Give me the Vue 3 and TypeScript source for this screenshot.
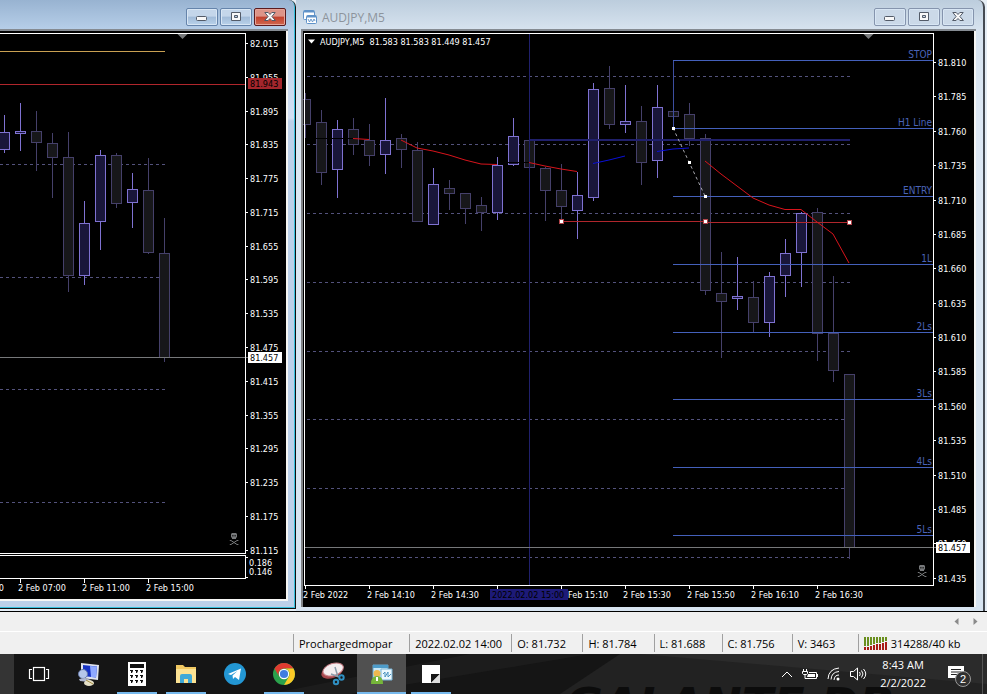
<script setup lang="ts">
type Candle = [cx: number, high: number, low: number, top: number, bottom: number, up: 0 | 1]
type Label = [y: number, text: string]

const leftCandles: Candle[] = [
  [4, 115, 153, 132, 149, 1], [20, 103, 151, 131, 133, 1], [36, 111, 171, 131, 142, 0],
  [52, 133, 198, 143, 157, 0], [68, 132, 292, 157, 275, 0], [84, 201, 285, 223, 275, 1],
  [100, 150, 250, 155, 221, 1], [116, 153, 208, 155, 203, 0], [132, 173, 228, 189, 202, 1],
  [148, 158, 254, 190, 252, 0], [164, 218, 362, 253, 357, 0],
]
const rightCandles: Candle[] = [
  [305, 93, 138, 99, 124, 0], [321, 110, 185, 122, 172, 0], [337, 120, 198, 129, 169, 1],
  [353, 118, 155, 129, 144, 0], [369, 124, 166, 140, 155, 0], [385, 98, 174, 140, 154, 1],
  [401, 134, 168, 138, 149, 0], [417, 142, 222, 150, 221, 0], [433, 168, 225, 184, 224, 1],
  [449, 180, 210, 188, 193, 0], [465, 193, 224, 193, 208, 0], [481, 197, 231, 205, 212, 0],
  [497, 157, 220, 165, 212, 1], [513, 118, 166, 136, 164, 1], [529, 140, 168, 140, 167, 0],
  [545, 167, 221, 168, 190, 0], [561, 164, 222, 190, 206, 0], [577, 172, 239, 195, 210, 1],
  [593, 83, 201, 89, 197, 1], [609, 66, 129, 88, 124, 0], [625, 85, 133, 121, 124, 1],
  [641, 106, 185, 121, 162, 0], [657, 85, 178, 107, 160, 1], [673, 61, 128, 111, 116, 0],
  [689, 103, 146, 114, 138, 0], [705, 134, 295, 138, 290, 0], [721, 252, 358, 293, 301, 0],
  [737, 257, 310, 296, 298, 1], [753, 281, 332, 297, 322, 0], [769, 272, 337, 276, 322, 1],
  [785, 239, 297, 253, 275, 1], [801, 212, 287, 213, 252, 1], [817, 208, 361, 212, 333, 0],
  [833, 276, 382, 333, 370, 0], [849, 374, 559, 374, 547, 0],
]
const leftPrices: Label[] = [
  [43, '82.015'], [77, '81.955'], [111, '81.895'], [144, '81.835'], [178, '81.775'], [212, '81.715'],
  [246, '81.655'], [279, '81.595'], [313, '81.535'], [347, '81.475'], [381, '81.415'], [415, '81.355'],
  [448, '81.295'], [482, '81.235'], [516, '81.175'], [550, '81.115'],
]
const rightPrices: Label[] = [
  [62, '81.810'], [96, '81.785'], [131, '81.760'], [165, '81.735'], [200, '81.710'], [234, '81.685'],
  [268, '81.660'], [303, '81.635'], [337, '81.610'], [371, '81.585'], [406, '81.560'], [440, '81.535'],
  [475, '81.510'], [509, '81.485'], [543, '81.460'], [578, '81.435'],
]
const levels: Label[] = [
  [60, 'STOP'], [128, 'H1 Line'], [196, 'ENTRY'], [264, '1L'],
  [332, '2Ls'], [399, '3Ls'], [467, '4Ls'], [535, '5Ls'],
]
const leftTimes: [number, string][] = [[20, '2 Feb 07:00'], [84, '2 Feb 11:00'], [148, '2 Feb 15:00']]
const rightTimes: [number, string][] = [
  [305, '2 Feb 2022'], [369, '2 Feb 14:10'], [433, '2 Feb 14:30'],
  [625, '2 Feb 15:30'], [689, '2 Feb 15:50'], [753, '2 Feb 16:10'], [817, '2 Feb 16:30'],
]
const rightTicks = [305, 369, 433, 497, 561, 625, 689, 753, 817]
const leftGrid = [164, 277, 389, 502]
const rightGrid = [76, 144, 213, 282, 351, 419, 488, 557]
const quote = 'AUDJPY,M5\u00a0\u00a081.583 81.583 81.449 81.457'
const status = ['Prochargedmopar', '2022.02.02 14:00', 'O: 81.732', 'H: 81.784', 'L: 81.688', 'C: 81.756', 'V: 3463']
const trafficBars = Array.from({ length: 8 }, (_, i) => ({ x: i * 3, split: 10 - Math.floor(i * 0.75) }))
</script>

<template>
  <div class="screen">
    <main class="workspace">
      <section class="win active">
        <header class="titlebar">
          <div class="controls">
            <button aria-label="Minimize"><svg width="12" height="10"><rect x=".5" y="4.500" width="10" height="4" rx="1" /></svg></button>
            <button aria-label="Restore"><svg width="12" height="10"><path fill-rule="evenodd" d="M1.500.5h9v8h-9zM4.500 3.500h3v2h-3z" /></svg></button>
            <button class="close" aria-label="Close"><svg width="12" height="10"><path d="M.8.5h3.400L6 2.500 7.800.5h3.400L7.900 4.500l3.500 4H7.900L6 6.500l-1.900 2H.6l3.500-4z" /></svg></button>
          </div>
        </header>
        <div class="view">
          <svg class="chart" viewBox="0 31 286 568" role="img" aria-label="Price chart">
            <g class="crisp">
              <path class="dash" v-for="y in leftGrid" :key="y" :d="`M0 ${y + 0.5}H166`" />
              <path class="orange" d="M0 51.500H165" />
              <g v-for="c in leftCandles" :key="c[0]" :class="c[5] ? 'up' : 'down'">
                <path :d="`M${c[0] + 0.5} ${c[1]}V${c[2]}`" />
                <rect :x="c[0] - 4.5" :y="c[3] + 0.5" width="10" :height="c[4] - c[3]" />
              </g>
              <path class="now" d="M0 357.500H248" />
              <path class="crimson" d="M0 84.500H245" />
              <path class="axis" d="M0 33.500H245.500V553.500H0M0 555.500H245.500V578.500H0" />
              <path class="axis" v-for="p in leftPrices" :key="p[0]" :d="`M245 ${p[0] + 0.5}h3`" />
              <path class="axis" v-for="t in leftTimes" :key="t[0]" :d="`M${t[0] + 0.5} 579v4`" />
              <path class="axis" d="M246 557.500h2M246 577.500h2" />
            </g>
            <path class="shift" d="M177.500 34h10l-5 5z" />
            <g class="lbl">
              <text v-for="p in leftPrices" :key="p[0]" x="250" :y="p[0] + 4">{{ p[1] }}</text>
              <text x="249" y="566">0.186</text>
              <text x="249" y="575">0.146</text>
              <text x="4" y="591" text-anchor="end">0</text>
              <text v-for="t in leftTimes" :key="t[1]" :x="t[0] - 2" y="591">{{ t[1] }}</text>
            </g>
            <rect x="248" y="78" width="34" height="11" fill="#a3262c" />
            <rect x="248" y="352" width="34" height="11" fill="#fff" />
            <g class="lbl ink">
              <text x="250" y="87">81.943</text>
              <text x="250" y="361">81.457</text>
            </g>
            <g class="skull" transform="translate(229 533)">
              <path fill-rule="evenodd" d="M3 0h4l1 1v3l-1 1v1H3V5L2 4V1zM3.400 2v1.400h1V2zM5.600 2v1.400h1V2z" />
              <path class="bones" d="M.8 7.500h1.200L8 11.500h1.400M9.400 7.500H8L2 11.500H.8" />
            </g>
          </svg>
        </div>
      </section>

      <section class="win idle">
        <header class="titlebar">
          <svg class="doc" width="14" height="15" aria-hidden="true">
            <g fill="#fff" stroke="#5f92c8">
              <rect x=".5" y=".5" width="11" height="9" rx="1" /><path d="M1 1.500h10" stroke-width="2" />
              <rect x="3.500" y="5.500" width="10" height="8" rx="1" /><path d="M4 6.500h9" stroke-width="2" />
              <path d="M5 9l1.500 3L8 9l1.500 3L11 9l1 2" fill="none" stroke-width=".9" />
            </g>
          </svg>
          <h1>AUDJPY,M5</h1>
          <div class="controls">
            <button aria-label="Minimize"><svg width="12" height="10"><rect x=".5" y="4.500" width="10" height="4" rx="1" /></svg></button>
            <button aria-label="Restore"><svg width="12" height="10"><path fill-rule="evenodd" d="M1.500.5h9v8h-9zM4.500 3.500h3v2h-3z" /></svg></button>
            <button aria-label="Close"><svg width="12" height="10"><path d="M.8.5h3.400L6 2.500 7.800.5h3.400L7.900 4.500l3.500 4H7.900L6 6.500l-1.900 2H.6l3.500-4z" /></svg></button>
          </div>
        </header>
        <div class="view">
          <svg class="chart" viewBox="303 31 671 576" role="img" aria-label="AUDJPY M5 price chart">
            <g class="crisp">
              <path class="dash" v-for="y in rightGrid" :key="y" :d="`M307 ${y + 0.5}H851`" />
              <path class="navy" d="M529.500 34V585" />
              <g v-for="c in rightCandles" :key="c[0]" :class="c[5] ? 'up' : 'down'">
                <path :d="`M${c[0] + 0.5} ${c[1]}V${c[2]}`" />
                <rect :x="c[0] - 4.5" :y="c[3] + 0.5" width="10" :height="c[4] - c[3]" />
              </g>
              <path class="navy" d="M529.500 139V168" />
              <path class="navy" stroke-width="2" d="M529 140H850" />
              <path stroke="#000" d="M316 138.500H353M508 162.500H529" />
              <path class="level" v-for="l in levels" :key="l[0]" :d="`M673 ${l[0] + 0.5}H933`" />
              <path stroke="#3c4ea0" d="M673.500 61V128" />
              <path class="now" d="M305 547.500H936" />
              <path class="crimson" d="M561 221.500H705M705 222.500H850" />
            </g>
            <g class="ma">
              <path d="M353 138.500L369 139.500M401 140L417 148 433 151 449 155 465 160 481 164 497 164.500M529 162.500L545 166 561 169 577 171.500M705 161L721 174 737 186 753 198 769 205 785 209.500H801L817 222 833 234 849 263" />
              <path class="blue" d="M593 163.500L609 160 625 156M657 151.500L673 149 689 148" />
              <path class="probe" d="M673 128L705 196" />
            </g>
            <g class="crisp">
              <rect class="knob red" v-for="k in [[561, 221], [705, 221], [849, 222]]" :key="k[0]" :x="k[0] - 1.5" :y="k[1] - 1.5" width="4" height="4" />
              <rect class="knob" v-for="k in [[673, 128], [689, 162], [705, 196]]" :key="k[0]" :x="k[0] - 1" :y="k[1] - 1" width="3" height="3" />
              <path class="axis" d="M304.500 585.500V33.500H933.500V585.500H304" />
              <path class="axis" v-for="p in rightPrices" :key="p[0]" :d="`M933 ${p[0] + 0.5}h3`" />
              <path class="axis" v-for="t in rightTicks" :key="t" :d="`M${t + 0.5} 586v3`" />
            </g>
            <path class="shift" d="M863.500 34h10l-5 5z" />
            <path fill="#fff" d="M308 39.500h7l-3.500 4z" />
            <g class="lbl">
              <text x="320" y="45">{{ quote }}</text>
              <text v-for="p in rightPrices" :key="p[0]" x="938" :y="p[0] + 4">{{ p[1] }}</text>
              <text v-for="t in rightTimes" :key="t[0]" :x="t[0] - 2" y="598">{{ t[1] }}</text>
            </g>
            <g class="lbl tag">
              <text v-for="l in levels" :key="l[0]" x="932" :y="l[0] - 2" text-anchor="end">{{ l[1] }}</text>
            </g>
            <rect x="490" y="589" width="78" height="11" fill="#1d1a78" />
            <rect x="936" y="542" width="34" height="11" fill="#fff" />
            <text class="lbl" x="568" y="598">Feb 15:10</text>
            <g class="lbl ink">
              <text x="492" y="598">2022.02.02 15:00</text>
              <text x="938" y="551">81.457</text>
            </g>
            <g class="skull" transform="translate(917 565)">
              <path fill-rule="evenodd" d="M3 0h4l1 1v3l-1 1v1H3V5L2 4V1zM3.400 2v1.400h1V2zM5.600 2v1.400h1V2z" />
              <path class="bones" d="M.8 7.500h1.200L8 11.500h1.400M9.400 7.500H8L2 11.500H.8" />
            </g>
          </svg>
        </div>
      </section>
    </main>

    <nav class="scroller" aria-label="Chart tabs">
      <button aria-label="Scroll left"><svg width="5" height="8"><path d="M4.500 0v7L.5 3.500z" /></svg></button>
      <button aria-label="Scroll right"><svg width="5" height="8"><path d="M.5 0v7l4-3.500z" /></svg></button>
    </nav>

    <footer class="status">
      <span v-for="s in status" :key="s" class="cell">{{ s }}</span>
      <span class="cell traffic">
        <svg width="23" height="13" aria-hidden="true">
          <g v-for="b in trafficBars" :key="b.x">
            <rect :x="b.x" y="0" width="2" :height="b.split - 1" fill="#6a8f1e" />
            <rect :x="b.x" :y="b.split" width="2" :height="13 - b.split" fill="#a81c16" />
          </g>
        </svg>
        314288/40 kb
      </span>
    </footer>

    <footer class="taskbar">
      <svg class="wallpaper" viewBox="0 0 987 40" preserveAspectRatio="xMaxYMid slice" aria-hidden="true">
        <path d="M270 40L470 0h120L350 40z" fill="#242424" opacity=".5" />
        <path d="M560 40L620 0h367v40z" fill="#222" />
        <path d="M640 0l347 30V0z" fill="#2b2b2b" />
        <text class="brand" x="565" y="67">GALANTE DB</text>
      </svg>
      <div class="sliver"></div>
      <div class="apps">
        <button aria-label="Task View">
          <svg width="22" height="16" fill="none" stroke="#fff" stroke-width="1.200">
            <rect x="5.500" y="1.500" width="11" height="13" /><path d="M4 3.500H1.500v9H4M18 3.500h2.500v9H18" />
          </svg>
        </button>
        <button aria-label="Remote Desktop">
          <svg width="24" height="26">
            <path d="M5 2l18 2-1 15-17-2z" fill="#dfe3ee" /><path d="M7 4l14 1.500-1 11-13-1.500z" fill="#1733c4" />
            <path d="M14 5l7 .5-1 11-5-.6z" fill="#8fa9ff" /><circle cx="7" cy="13" r="4.500" fill="#b6c7ea" stroke="#6a7dab" />
            <path d="M3 18l6-1 6 2-3 2-8-1z" fill="#aeb6cf" /><ellipse cx="13" cy="22" rx="5" ry="3" fill="#e6e0c8" /><path d="M10 19l7 4" stroke="#a48d42" />
          </svg>
        </button>
        <button class="open" aria-label="Calculator">
          <svg width="18" height="24"><path d="M0 0h18v24H0z" fill="#fff" /><path d="M2 2h14v4H2z" fill="#111" />
            <g fill="#111"><path v-for="n in 9" :key="n" :d="`M${2 + ((n - 1) % 3) * 5} ${8 + Math.floor((n - 1) / 3) * 5}h3v1l-1 2h-1v-2h-1z`" /></g>
          </svg>
        </button>
        <button class="open" aria-label="File Explorer">
          <svg width="22" height="20"><path d="M1 1h7l2 2h11v15H1z" fill="#f0c862" /><path d="M1 5h20v14H1z" fill="#fbe293" />
            <path d="M5 19v-7q0-2 2-2h8q2 0 2 2v7h-4v-4H9v4z" fill="#3fa9d8" />
          </svg>
        </button>
        <button aria-label="Telegram">
          <svg width="22" height="22"><circle cx="11" cy="11" r="11" fill="#2397d4" /><path d="M4 11l13-5.500-2 11.500-4-3-2 2-.5-3.500 5-4.500-6.500 4z" fill="#fff" /></svg>
        </button>
        <button class="open" aria-label="Chrome">
          <svg width="22" height="22"><circle cx="11" cy="11" r="11" fill="#2ba24c" />
            <path d="M1.500 5.500A11 11 0 0 1 20.500 5.500H11A5.500 5.500 0 0 0 6.200 13.700z" fill="#e03b30" />
            <path d="M20.500 5.500A11 11 0 0 1 11 22l4.800-8.300A5.500 5.500 0 0 0 11 5.500z" fill="#fbc926" />
            <circle cx="11" cy="11" r="5.200" fill="#fff" /><circle cx="11" cy="11" r="4.100" fill="#3f7de0" />
          </svg>
        </button>
        <button aria-label="Snipping Tool">
          <svg width="24" height="24"><ellipse cx="11" cy="10" rx="11" ry="6" transform="rotate(-18 11 10)" fill="#a8494f" />
            <ellipse cx="12" cy="7.500" rx="10.500" ry="6" transform="rotate(-18 12 7)" fill="#f4eef0" stroke="#c98188" />
            <path d="M14 5l3 10M10 12l8 3" stroke="#8b9cab" stroke-width="1.500" /><g fill="none" stroke="#2f8fc2" stroke-width="2"><circle cx="15" cy="20" r="2.200" /><circle cx="20.500" cy="15.500" r="2.200" /></g>
          </svg>
        </button>
        <button class="open current" aria-label="MetaTrader">
          <svg width="22" height="20"><path d="M2 1h15v13H2z" fill="#c9e7f5" stroke="#69a7cc" /><path d="M2 1h15v3H2z" fill="#4d9cca" />
            <path d="M10 5h11v11H10z" fill="#ecf7fd" stroke="#78b4d6" /><path d="M12 10l2-2v5l3-5v5l3-3" fill="none" stroke="#4a91bf" />
            <circle cx="6" cy="9.500" r="3.500" fill="#efb94f" /><path d="M0 20q0-8 6-8t6 8z" fill="#76b63a" /><path d="M5 13h2v4H5z" fill="#fff" />
          </svg>
        </button>
        <button class="open" aria-label="Sticky Notes">
          <svg width="18" height="18"><path d="M0 0h18v18H0z" fill="#fff" /><path d="M9 9h9l-9 9z" fill="#161616" /><path d="M18 9v9H9z" fill="#ddd" /></svg>
        </button>
      </div>
      <div class="tray">
        <button aria-label="Show hidden icons"><svg width="12" height="8"><path d="M1 7l5-5 5 5" /></svg></button>
        <button aria-label="Battery"><svg width="16" height="12"><path d="M1.500 1v2M4.500 1v2M.5 3.500h5v2l-1 1h-3l-1-1zM3 7v3.500h11.500v-6H7" /><path d="M6 6h7v3H5z" fill="#fff" stroke="none" /><path d="M15.500 6v3" /></svg></button>
        <button aria-label="Network"><svg width="14" height="14"><path d="M1 12Q1.500 2 12 1M4 12.500Q4.500 5 12 4.500M7 13q.5-5 5-5" /><circle cx="11" cy="12" r="1.500" fill="#fff" stroke="none" /></svg></button>
        <button aria-label="Volume"><svg width="17" height="14"><path d="M.5 4.500h3l4-3.500v12l-4-3.500h-3zM9.500 5q1.500 2 0 4M11.500 3.500q3 3.500 0 7M13.500 2q4.500 5 0 10" /></svg></button>
        <time class="clock">8:43 AM<br />2/2/2022</time>
        <button class="notes" aria-label="Notifications, 2 new">
          <svg width="16" height="16"><path d="M0 0h16v12h-4l-4 4v-4H0z" fill="#fff" stroke="none" /><path d="M3 3.500h10M3 6h10M3 8.500h6" stroke="#222" /></svg>
          <span class="badge">2</span>
        </button>
        <div class="desktop"></div>
      </div>
    </footer>
  </div>
</template>

<style>
body {
  margin: 0;
  background: #f0f0f0;
}
</style>

<style scoped>
.screen {
  min-height: 100vh;
  display: flex;
  flex-direction: column;
  overflow: hidden;
  font-family: "Open Sans", "Noto Sans", sans-serif;
  font-size: 11px;
  color: #000;
}
button {
  margin: 0;
  padding: 0;
  border: 0;
  background: none;
  display: flex;
  align-items: center;
  justify-content: center;
}
.workspace {
  display: grid;
  grid-template-columns: 296fr 691fr;
  align-items: start;
  background: #e6eef6;
  border-bottom: 1px solid #000;
}
.win {
  box-sizing: border-box;
  border-top-right-radius: 7px;
}
.active {
  padding: 0 7px 7px 0;
  border-right: 1px solid #101010;
  border-bottom: 1px solid #101010;
  background: linear-gradient(#98b3d1 0, #b7cfe9 30px, #d3e0f4 118px, #bcd0e9 121px);
  box-shadow: inset -1px -1px #36c0dd;
}
.idle {
  margin-right: 2px;
  padding: 0 7px 4px 5px;
  border-right: 2px solid #454a52;
  background: linear-gradient(#bccddd 0, #d7e3ef 30px, #dde8f4 118px, #d7e4f1);
}
.titlebar {
  height: 31px;
  box-sizing: border-box;
  border-bottom: 2px solid #858b92;
  display: flex;
  align-items: center;
  gap: 5px;
  padding: 5px 2px 0 2px;
}
.titlebar h1 {
  margin: 0;
  font-size: 12px;
  font-weight: 400;
  color: #8d949c;
}
.controls {
  margin-left: auto;
  display: flex;
  gap: 2px;
}
.controls button {
  width: 32px;
  height: 18px;
  border: 1px solid #6584ab;
  border-radius: 2px;
  background: linear-gradient(#c4d6ea 45%, #a1bbd8 50%, #b9d2ea);
  box-shadow: inset 0 0 0 1px #d8e6f4;
}
.controls svg {
  fill: #f8f8f8;
  stroke: #535b68;
}
.controls .close {
  border-color: #5b1b1e;
  background: linear-gradient(#dd9488 45%, #c2402c 50%, #d0684f);
  box-shadow: inset 0 0 0 1px #e5a498;
}
.idle .controls button {
  border-color: #8594ad;
  background: #cbd9e8;
}
.view {
  background: #000;
  border-right: 2px solid #f6f6f4;
}
.active .view {
  border-bottom: 2px solid #f6f6f4;
}
.idle .view {
  border-left: 2px solid #808387;
}
.chart {
  display: block;
  width: 100%;
}
.crisp {
  shape-rendering: crispEdges;
  fill: none;
}
.dash {
  stroke: #53527c;
  stroke-dasharray: 3 3;
}
.orange { stroke: #c9a052; }
.crimson { stroke: #b0262c; }
.now { stroke: #76787a; }
.axis { stroke: #fff; }
.navy { stroke: #20206c; }
.level { stroke: #4460bb; }
.up { stroke: #7f72d2; }
.up rect { fill: #19163a; }
.down { stroke: #45406a; }
.down rect { fill: #17171a; }
.shift { fill: #77797b; }
.skull { fill: #77797b; }
.bones {
  fill: none;
  stroke: #77797b;
}
.ma {
  fill: none;
  stroke: #d8141c;
}
.ma .blue { stroke: #0a10d8; }
.ma .probe {
  stroke: #a6a6ad;
  stroke-dasharray: 3 3;
}
.knob { fill: #fff; }
.knob.red { stroke: #b0444a; }
.lbl {
  font-family: "DejaVu Sans Condensed", "DejaVu Sans", sans-serif;
  font-size: 9px;
  fill: #fff;
}
.ink { fill: #000; }
.tag {
  font-size: 10px;
  fill: #4a63b8;
}
.scroller {
  height: 19px;
  display: flex;
  justify-content: flex-end;
  align-items: center;
  gap: 14px;
  padding-right: 9px;
  border-bottom: 1px solid #fff;
  background: #f0f0f0;
}
.scroller svg { fill: #8a8a8a; }
.status {
  height: 22px;
  display: grid;
  grid-template-columns: 116fr 102fr 71fr 71fr 68fr 70fr 66fr 129fr;
  padding-left: 293px;
  background: #f0f0f0;
}
.cell {
  display: flex;
  align-items: center;
  margin: 2px 0;
  padding-left: 5px;
  border-left: 1px solid #a0a0a0;
  white-space: nowrap;
}
.traffic { gap: 4px; }
.taskbar {
  position: relative;
  flex: 1;
  min-height: 40px;
  display: flex;
  background: #151515;
}
.wallpaper {
  position: absolute;
  inset: 0;
  width: 100%;
  height: 100%;
}
.brand {
  font: italic bold 46px "DejaVu Sans", sans-serif;
  fill: #0c0c0c;
}
.sliver {
  position: relative;
  width: 14px;
  background: #343434;
}
.apps,
.tray {
  position: relative;
  display: flex;
}
.apps button {
  width: 49px;
  box-sizing: border-box;
}
.apps .open {
  background: linear-gradient(#76b9ed, #76b9ed) center bottom / 40px 2px no-repeat;
}
.apps .current {
  background: linear-gradient(#76b9ed, #76b9ed) center bottom / 100% 2px no-repeat #505050;
}
.tray {
  margin-left: auto;
  align-items: center;
  gap: 9px;
  color: #fff;
}
.tray svg {
  fill: none;
  stroke: #fff;
}
.clock {
  margin: 0 13px 0 4px;
  line-height: 18px;
  text-align: center;
}
.notes { position: relative; }
.badge {
  position: absolute;
  left: 7px;
  top: 5px;
  width: 14px;
  height: 14px;
  border: 1px solid #999;
  border-radius: 50%;
  background: #303030;
  color: #fff;
  font-size: 11px;
  line-height: 14px;
}
.desktop {
  align-self: stretch;
  width: 4px;
  margin-left: 9px;
  border-left: 1px solid #555;
}
</style>
